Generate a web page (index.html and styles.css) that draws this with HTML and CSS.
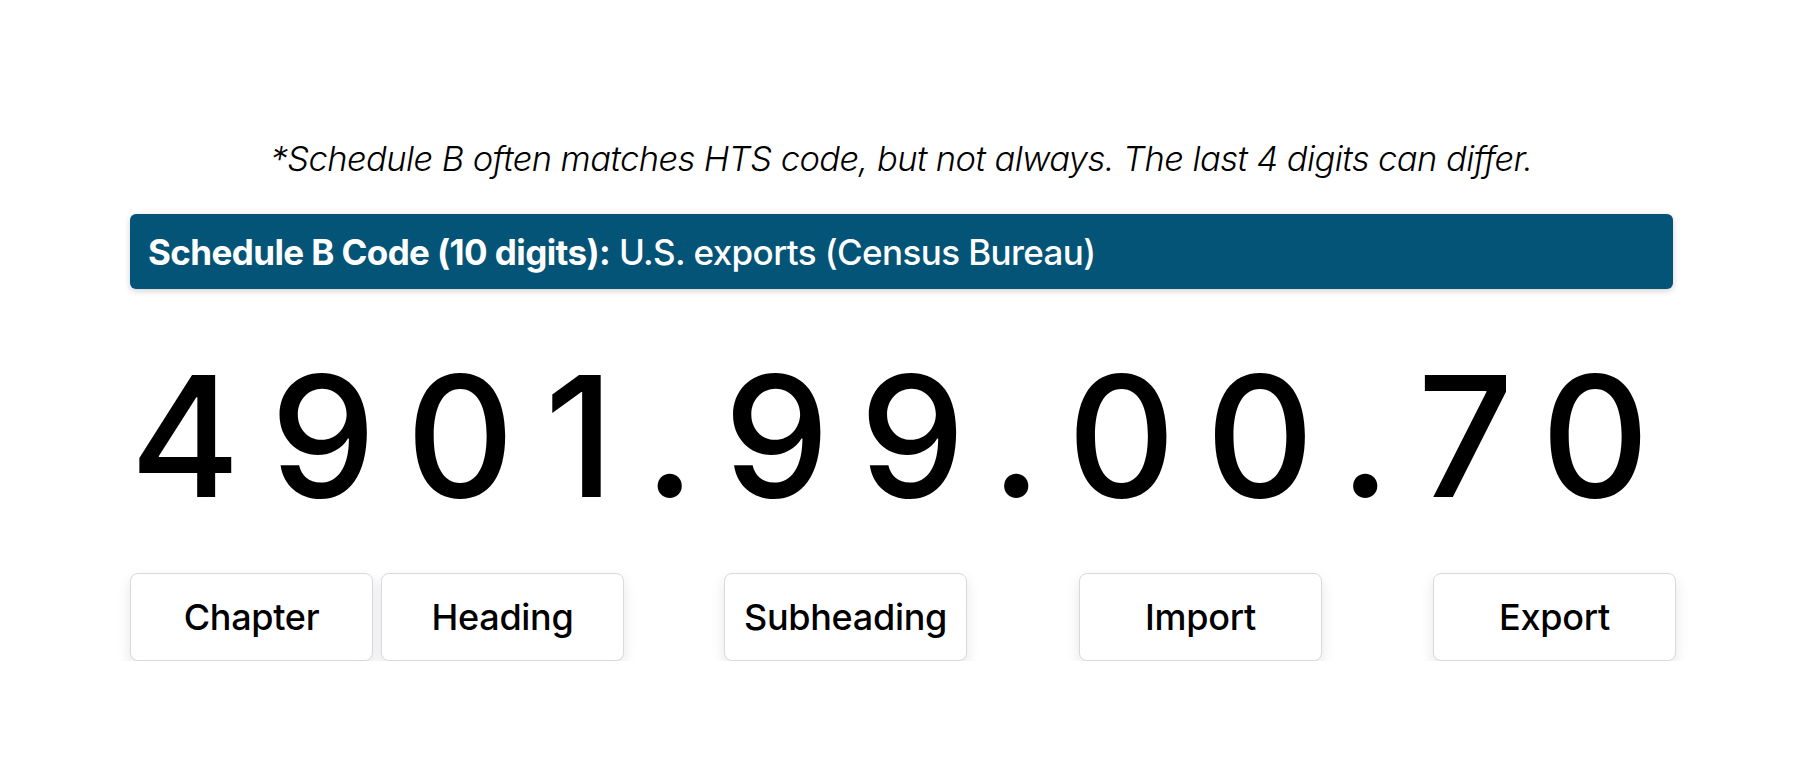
FILE: index.html
```html
<!DOCTYPE html>
<html lang="en">
<head>
<meta charset="utf-8">
<title>Schedule B Code</title>
<link rel="stylesheet" href="styles.css">
</head>
<body>
<main class="page">
  <p class="note">*Schedule B often matches HTS code, but not always. The last 4 digits can differ.</p>
  <div class="banner"><strong>Schedule B Code (10 digits):</strong> U.S. exports (Census Bureau)</div>
  <div class="code">4901.99.00.70</div>
  <div class="buttons">
    <button class="btn">Chapter</button>
    <button class="btn btn-heading">Heading</button>
    <button class="btn btn-sub">Subheading</button>
    <button class="btn btn-import">Import</button>
    <button class="btn btn-export">Export</button>
  </div>
</main>
</body>
</html>
```
FILE: styles.css
```css
html, body {
  margin: 0;
  padding: 0;
  background: #ffffff;
}
body {
  font-family: Inter, "Noto Sans", sans-serif;
  color: #000;
}
.page {
  padding: 139px 130px 0;
  display: flex;
  flex-direction: column;
}
.note {
  margin: 0;
  text-align: center;
  font-style: italic;
  font-weight: 300;
  font-size: 34.5px;
  line-height: 40px;
  letter-spacing: -0.55px;
}
.banner {
  margin-top: 35px;
  background: #045477;
  color: #fff;
  border-radius: 6px;
  padding: 19px 18px 17px;
  font-size: 35px;
  line-height: 39px;
  font-weight: 500;
  letter-spacing: -0.6px;
  box-shadow: 0 2px 6px rgba(0, 0, 0, 0.18);
}
.banner strong {
  font-weight: 700;
}
.code {
  margin-top: 63px;
  text-align: center;
  font-size: 168px;
  line-height: 168px;
  font-weight: 500;
  letter-spacing: 30px;
}
.buttons {
  margin-top: 53px;
  display: flex;
}
.btn {
  flex: none;
  width: 243px;
  height: 88px;
  background: #fff;
  border: 1px solid #d6d9df;
  border-radius: 8px;
  box-shadow: 0 6px 14px rgba(0, 0, 0, 0.1);
  font-family: Inter, "Noto Sans", sans-serif;
  font-size: 36px;
  font-weight: 500;
  letter-spacing: -0.3px;
  color: #000;
  padding: 0;
}
.btn-heading {
  margin-left: 8px;
}
.btn-sub {
  margin-left: 100px;
}
.btn-import {
  margin-left: 112px;
}
.btn-export {
  margin-left: 111px;
}
```
